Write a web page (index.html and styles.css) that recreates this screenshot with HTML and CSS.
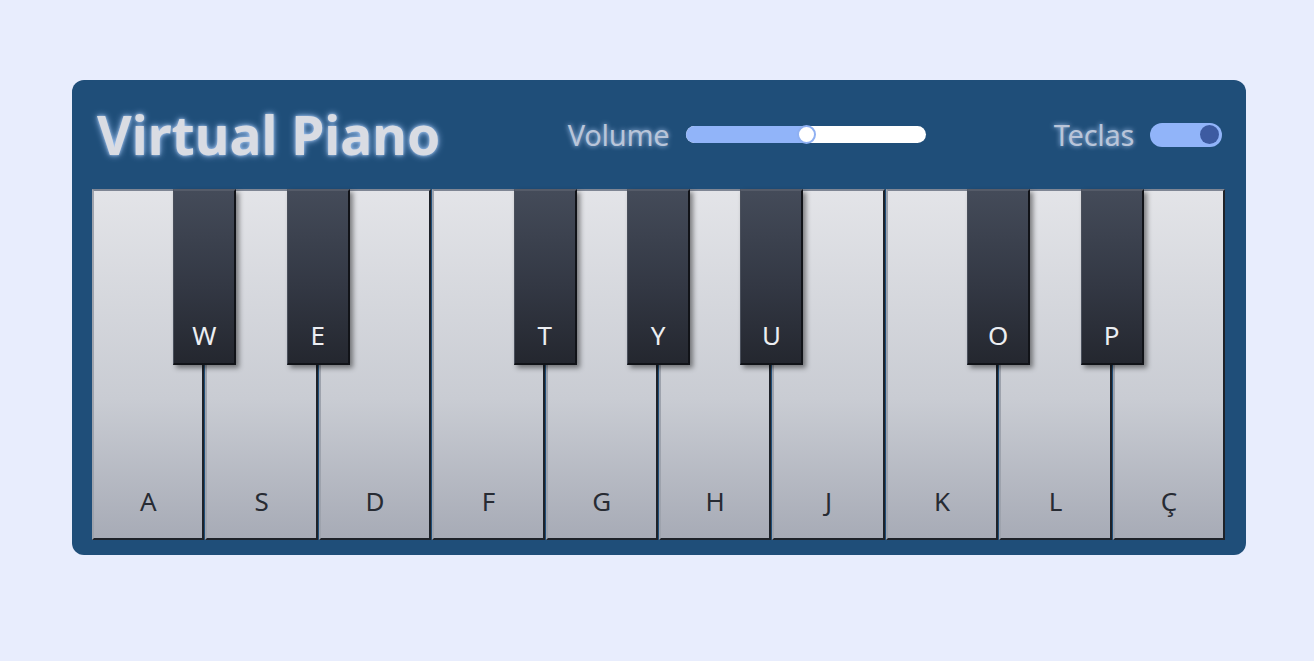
FILE: index.html
```html
<!DOCTYPE html>
<html lang="pt">
<head>
<meta charset="utf-8">
<title>Virtual Piano</title>
<link rel="stylesheet" href="styles.css">
</head>
<body>
<div class="piano">
  <header class="header">
    <h1 class="title">Virtual Piano</h1>
    <div class="control">
      <span class="label">Volume</span>
      <div class="slider">
        <div class="slider-fill" style="width:50%"></div>
        <div class="slider-thumb"></div>
      </div>
    </div>
    <div class="control control-keys">
      <span class="label">Teclas</span>
      <div class="toggle"><div class="toggle-knob"></div></div>
    </div>
  </header>
  <div class="keys">
    <div class="key white"><span>A</span></div>
    <div class="key black"><span>W</span></div>
    <div class="key white"><span>S</span></div>
    <div class="key black"><span>E</span></div>
    <div class="key white"><span>D</span></div>
    <div class="key white"><span>F</span></div>
    <div class="key black"><span>T</span></div>
    <div class="key white"><span>G</span></div>
    <div class="key black"><span>Y</span></div>
    <div class="key white"><span>H</span></div>
    <div class="key black"><span>U</span></div>
    <div class="key white"><span>J</span></div>
    <div class="key white"><span>K</span></div>
    <div class="key black"><span>O</span></div>
    <div class="key white"><span>L</span></div>
    <div class="key black"><span>P</span></div>
    <div class="key white"><span>Ç</span></div>
  </div>
</div>
</body>
</html>
```

FILE: styles.css
```css
* { box-sizing: border-box; }
html, body { margin: 0; padding: 0; }
body {
  background: #e8edfd;
  font-family: "Noto Sans", "Open Sans", "DejaVu Sans", sans-serif;
  padding: 80px 0 0 72px;
  height: 661px;
}
.piano {
  width: 1174px;
  background: #1f4e79;
  border-radius: 12px;
  padding: 0 21px 15px 20px;
}
.header {
  height: 109px;
  display: flex;
  align-items: center;
  justify-content: space-between;
  padding: 0 3px 0 5px;
}
.title {
  margin: 0;
  font-size: 53.4px;
  font-weight: 700;
  color: #d9dce3;
  letter-spacing: 0;
  text-shadow: 0 0 7px rgba(170, 205, 255, 0.9), 0 0 3px rgba(200, 225, 255, 0.7);
  line-height: 1;
}
.control {
  display: flex;
  align-items: center;
  gap: 17px;
}
.control-keys { gap: 16px; }
.label {
  font-size: 29px;
  color: #b9c5d9;
  letter-spacing: -0.3px;
  text-shadow: 0 0 5px rgba(190, 215, 255, 0.9);
  line-height: 1;
}
.slider {
  position: relative;
  width: 240px;
  height: 17px;
  background: #ffffff;
  border-radius: 9px;
}
.slider-fill {
  height: 100%;
  background: #91b4f9;
  border-radius: 9px 0 0 9px;
}
.slider-thumb {
  position: absolute;
  left: 111px;
  top: -1px;
  width: 19px;
  height: 19px;
  border-radius: 50%;
  background: #ffffff;
  border: 2px solid #8fb0f2;
}
.toggle {
  width: 72px;
  height: 24px;
  background: #91b4f9;
  border-radius: 12px;
  display: flex;
  justify-content: flex-end;
  align-items: center;
  padding: 0 3px;
}
.toggle-knob {
  width: 19px;
  height: 19px;
  border-radius: 50%;
  background: #3d5ba1;
}
.keys {
  display: flex;
  height: 351px;
  gap: 1px;
}
.key span {
  font-size: 26px;
  line-height: 1;
}
.white {
  flex: 1;
  display: flex;
  justify-content: center;
  align-items: flex-end;
  padding-bottom: 24px;
  background: linear-gradient(#e3e4e8, #c9ccd3 60%, #a7abb6);
  border-top: 2px solid #7f8694;
  border-left: 2px solid #9ea3ad;
  border-right: 2px solid #1e2229;
  border-bottom: 2px solid #1e2229;
  color: #272b33;
}
.black {
  position: relative;
  z-index: 2;
  flex: 0 0 63px;
  margin: 0 -32px;
  height: 176px;
  display: flex;
  justify-content: center;
  align-items: flex-end;
  padding-bottom: 15px;
  background: linear-gradient(#444b59, #333844 55%, #24272f);
  border-top: 2px solid #555b68;
  border-left: 1px solid #4a505c;
  border-right: 2px solid #111318;
  border-bottom: 2px solid #111318;
  box-shadow: 3px 3px 5px rgba(0, 0, 0, 0.45);
  color: #eceef2;
}
```
